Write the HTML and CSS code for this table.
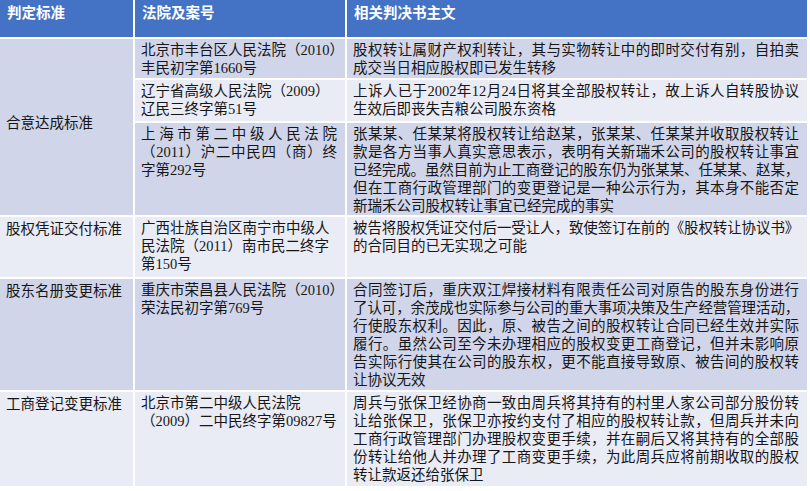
FILE: index.html
```html
<!DOCTYPE html>
<html lang="zh-CN">
<head>
<meta charset="utf-8">
<title>股权转让判定标准</title>
<link rel="stylesheet" href="styles.css">
</head>
<body>
<table class="grid">
  <colgroup>
    <col class="c1">
    <col class="c2">
    <col class="c3">
  </colgroup>
  <thead>
    <tr class="hd">
      <th>判定标准</th>
      <th>法院及案号</th>
      <th class="last">相关判决书主文</th>
    </tr>
  </thead>
  <tbody>
    <tr class="dark r1">
      <td rowspan="3" class="std mid dark">合意达成标准</td>
      <td class="court">
        <span class="ln j">北京市丰台区人民法院（2010）</span>
        <span class="ln">丰民初字第1660号</span>
      </td>
      <td class="text last">
        <span class="ln j">股权转让属财产权利转让，其与实物转让中的即时交付有别，自拍卖</span>
        <span class="ln">成交当日相应股权即已发生转移</span>
      </td>
    </tr>
    <tr class="light r2">
      <td class="court">
        <span class="ln">辽宁省高级人民法院（2009）</span>
        <span class="ln">辽民三终字第51号</span>
      </td>
      <td class="text last">
        <span class="ln j">上诉人已于2002年12月24日将其全部股权转让，故上诉人自转股协议</span>
        <span class="ln">生效后即丧失吉粮公司股东资格</span>
      </td>
    </tr>
    <tr class="dark r3">
      <td class="court">
        <span class="ln j">上海市第二中级人民法院</span>
        <span class="ln j">（2011）沪二中民四（商）终</span>
        <span class="ln">字第292号</span>
      </td>
      <td class="text last">
        <span class="ln j">张某某、任某某将股权转让给赵某，张某某、任某某并收取股权转让</span>
        <span class="ln j">款是各方当事人真实意思表示，表明有关新瑞禾公司的股权转让事宜</span>
        <span class="ln j tight">已经完成。虽然目前为止工商登记的股东仍为张某某、任某某、赵某，</span>
        <span class="ln j">但在工商行政管理部门的变更登记是一种公示行为，其本身不能否定</span>
        <span class="ln">新瑞禾公司股权转让事宜已经完成的事实</span>
      </td>
    </tr>
    <tr class="light r4">
      <td class="std">股权凭证交付标准</td>
      <td class="court">
        <span class="ln">广西壮族自治区南宁市中级人</span>
        <span class="ln">民法院（2011）南市民二终字</span>
        <span class="ln">第150号</span>
      </td>
      <td class="text last">
        <span class="ln j tight">被告将股权凭证交付后一受让人，致使签订在前的《股权转让协议书》</span>
        <span class="ln">的合同目的已无实现之可能</span>
      </td>
    </tr>
    <tr class="dark r5">
      <td class="std">股东名册变更标准</td>
      <td class="court">
        <span class="ln j">重庆市荣昌县人民法院（2010）</span>
        <span class="ln">荣法民初字第769号</span>
      </td>
      <td class="text last">
        <span class="ln j">合同签订后，重庆双江焊接材料有限责任公司对原告的股东身份进行</span>
        <span class="ln j tight">了认可，余茂成也实际参与公司的重大事项决策及生产经营管理活动，</span>
        <span class="ln j">行使股东权利。因此，原、被告之间的股权转让合同已经生效并实际</span>
        <span class="ln j">履行。虽然公司至今未办理相应的股权变更工商登记，但并未影响原</span>
        <span class="ln j">告实际行使其在公司的股东权，更不能直接导致原、被告间的股权转</span>
        <span class="ln">让协议无效</span>
      </td>
    </tr>
    <tr class="light r6">
      <td class="std">工商登记变更标准</td>
      <td class="court">
        <span class="ln">北京市第二中级人民法院</span>
        <span class="ln">（2009）二中民终字第09827号</span>
      </td>
      <td class="text last">
        <span class="ln j">周兵与张保卫经协商一致由周兵将其持有的村里人家公司部分股份转</span>
        <span class="ln j">让给张保卫，张保卫亦按约支付了相应的股权转让款，但周兵并未向</span>
        <span class="ln j">工商行政管理部门办理股权变更手续，并在嗣后又将其持有的全部股</span>
        <span class="ln j">份转让给他人并办理了工商变更手续，为此周兵应将前期收取的股权</span>
        <span class="ln">转让款返还给张保卫</span>
      </td>
    </tr>
  </tbody>
</table>
</body>
</html>
```

FILE: styles.css
```css
html, body {
  margin: 0;
  padding: 0;
  background: #ffffff;
}

.grid {
  border-collapse: separate;
  border-spacing: 0;
  table-layout: fixed;
  width: 807px;
  font-family: "Liberation Serif", "Noto Sans CJK SC", sans-serif;
  font-size: 14.5px;
  line-height: 18px;
  color: #161616;
}

.c1 { width: 135px; }
.c2 { width: 212px; }
.c3 { width: 460px; }

.grid th,
.grid td {
  box-sizing: border-box;
  border-right: 2px solid #ffffff;
  border-bottom: 2px solid #ffffff;
  vertical-align: top;
  text-align: left;
  padding: 2px 8px 0 6px;
}

.grid th.last,
.grid td.last {
  border-right: none;
}

.hd th {
  background: #4472c4;
  color: #ffffff;
  font-family: "Noto Sans CJK SC", sans-serif;
  font-weight: 700;
  padding-top: 3px;
  padding-left: 7px;
}

.hd { height: 39px; }
.r1 { height: 41px; }
.r2 { height: 43px; }
.r3 { height: 93px; }
.r4 { height: 62px; }
.r5 { height: 113px; }
.r6 { height: 96px; }

.dark td, td.dark { background: #d0d5ea; }
.light td { background: #e9ebf5; }

.std {
  padding-left: 7px;
  font-family: "Noto Sans CJK SC", sans-serif;
}

.std.mid {
  vertical-align: middle;
  padding-bottom: 12px;
}

.court {
  padding-right: 8px;
}

.text {
  padding-left: 5px;
  padding-right: 15px;
}

.ln {
  display: block;
  white-space: nowrap;
}

.ln.j {
  text-align: justify;
  text-align-last: justify;
}

.ln.tight {
  letter-spacing: -0.3px;
}
```
